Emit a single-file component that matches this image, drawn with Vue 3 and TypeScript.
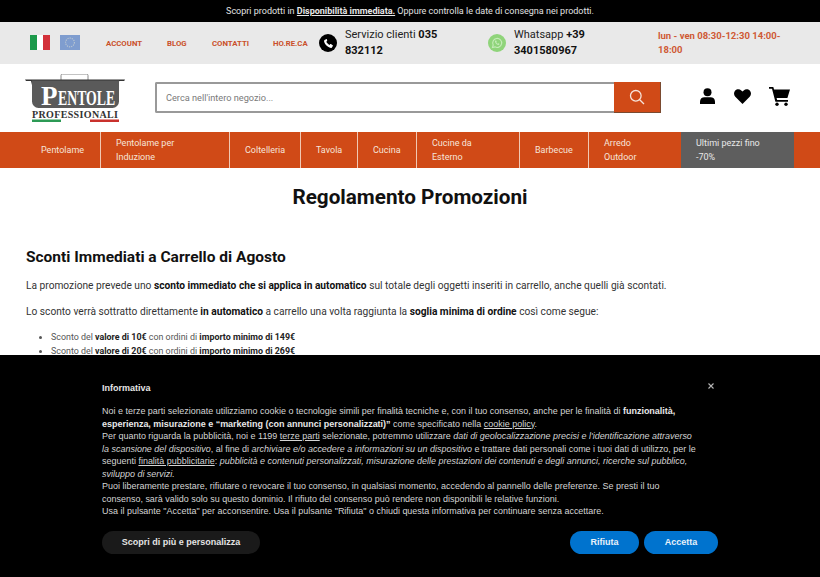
<script setup lang="ts">
const links: string[] = ['ACCOUNT', 'BLOG', 'CONTATTI', 'HO.RE.CA']
interface NavItem { lines: string[]; promo?: boolean }
const nav: NavItem[] = [
  { lines: ['Pentolame'] },
  { lines: ['Pentolame per', 'Induzione'] },
  { lines: ['Coltelleria'] },
  { lines: ['Tavola'] },
  { lines: ['Cucina'] },
  { lines: ['Cucine da', 'Esterno'] },
  { lines: ['Barbecue'] },
  { lines: ['Arredo', 'Outdoor'] },
  { lines: ['Ultimi pezzi fino', '-70%'], promo: true },
]
</script>

<template>
  <div class="page">
    <div class="notice">
      Scopri prodotti in <a class="notice-link">Disponibilità immediata.</a> Oppure controlla le date di consegna nei prodotti.
    </div>

    <div class="utility">
      <div class="flags">
        <svg width="20" height="15" viewBox="0 0 20 15"><rect width="7" height="15" fill="#1d9a4b"/><rect x="7" width="6" height="15" fill="#fff"/><rect x="13" width="7" height="15" fill="#d3313a"/></svg>
        <svg width="20" height="15" viewBox="0 0 20 15"><rect width="20" height="15" fill="#7f9dcf"/><circle cx="10" cy="7.5" r="4.4" fill="none" stroke="#b9c6d2" stroke-width="1.1" stroke-dasharray="1.2 1"/></svg>
      </div>
      <nav class="links"><a v-for="l in links" :key="l">{{ l }}</a></nav>
      <div class="contact phone">
        <span class="badge black">
          <svg width="11" height="11" viewBox="0 0 24 24"><path fill="#fff" d="M6.6 2.5 3.4 4.6C2.2 5.5 2 7 2.6 8.700c2.200 6 6.700 10.500 12.700 12.700 1.700.6 3.200.4 4.100-.8l2.100-3.200c.4-.6.2-1.300-.4-1.700l-3.900-2.500c-.5-.3-1.200-.3-1.700.2l-1.500 1.600c-2.700-1.300-5.500-4.100-6.800-6.800l1.600-1.500c.5-.5.5-1.200.2-1.700L8.300 2.900c-.4-.6-1.100-.8-1.700-.4z"/></svg>
        </span>
        <p class="contact-text">Servizio clienti <b>035 832112</b></p>
      </div>
      <div class="contact whatsapp">
        <span class="badge green">
          <svg width="12" height="12" viewBox="0 0 24 24"><path fill="none" stroke="#c6ecb9" stroke-width="2.200" d="M3 21l1.400-5A9 9 0 1 1 8 19.700z"/><path fill="#c6ecb9" d="M8.800 7.200c-.6.500-1 1.300-.8 2.300.5 2.700 3.300 5.600 6.200 6.300 1 .2 1.900-.2 2.400-.9.300-.5.300-1 0-1.200l-1.800-1c-.3-.1-.6 0-.8.200l-.6.700c-1.200-.5-2.200-1.500-2.800-2.700l.6-.6c.2-.2.300-.5.200-.8l-.8-1.900c-.3-.4-1.200-.6-1.800-.4z"/></svg>
        </span>
        <p class="contact-text">Whatsapp <b>+39 3401580967</b></p>
      </div>
      <p class="hours">lun - ven 08:30-12:30 14:00-18:00</p>
    </div>

    <header class="masthead">
      <svg class="logo" width="100" height="50" viewBox="0 0 100 50">
        <path d="M36 6V1.500A1.500 1.500 0 0 1 37.500 0h24A1.500 1.500 0 0 1 63 1.500V6" fill="none" stroke="#888" stroke-width="1"/>
        <path d="M0 5.500h100l-.8 1.500h-5l-.7 4.500h-.9V7H8v4.500h-.9L6 7H1z" fill="#333"/>
        <path d="M7 6.500h87v21a6.500 6.500 0 0 1-6.500 6.500h-74A6.500 6.500 0 0 1 7 27.500z" fill="#5a5a5a"/>
        <text x="16" y="31" class="logo-p">P</text>
        <g transform="translate(33 31) scale(.69 1)"><text class="logo-entole">ENTOLE</text></g>
        <text x="7" y="43.500" class="logo-sub" textLength="86">PROFESSIONALI</text>
        <rect x="7" y="45.500" width="29" height="2.500" fill="#2c9a55"/>
        <rect x="65" y="45.500" width="29" height="2.500" fill="#c9312d"/>
      </svg>
      <form class="search" @submit.prevent>
        <input class="search-input" type="text" placeholder="Cerca nell'intero negozio..." />
        <button class="search-btn" type="button" aria-label="Cerca">
          <svg width="16" height="16" viewBox="0 0 16 16" fill="none" stroke="#f6e3da" stroke-width="1.300"><circle cx="6.800" cy="6.800" r="5.300"/><path d="M10.700 10.700 15 15"/></svg>
        </button>
      </form>
      <div class="actions">
        <svg width="17" height="16" viewBox="0 0 17 16"><circle cx="8.500" cy="4.200" r="4" fill="#000"/><path d="M1 16v-2.600C1 10.800 3 9.200 5.500 9.200h6c2.500 0 4.500 1.600 4.500 4.200V16z" fill="#000"/></svg>
        <svg width="17" height="15" viewBox="0 0 17 15"><path d="M8.500 15 1.300 7.700C-.4 5.900-.4 3.200 1.200 1.500 2.900-.3 5.600-.3 7.300 1.400l1.200 1.200 1.200-1.200c1.700-1.700 4.400-1.700 6.100.1 1.600 1.700 1.600 4.400-.1 6.200z" fill="#000"/></svg>
        <svg width="21" height="19" viewBox="0 0 21 19"><path d="M0 0h4.300l.8 2.500H21l-2.600 8.500H7.600l.5 2H19v1.800H6.400L3 1.800H0z" fill="#000"/><circle cx="8" cy="17.200" r="1.700" fill="#000"/><circle cx="17" cy="17.200" r="1.700" fill="#000"/></svg>
      </div>
    </header>

    <nav class="menu">
      <a v-for="item in nav" :key="item.lines[0]" class="menu-item" :class="{ promo: item.promo }">
        <span v-for="line in item.lines" :key="line">{{ line }}</span>
      </a>
    </nav>

    <main class="content">
      <h1>Regolamento Promozioni</h1>
      <h2>Sconti Immediati a Carrello di Agosto</h2>
      <p>La promozione prevede uno <b>sconto immediato che si applica in automatico</b> sul totale degli oggetti inseriti in carrello, anche quelli già scontati.</p>
      <p>Lo sconto verrà sottratto direttamente <b>in automatico</b> a carrello una volta raggiunta la <b>soglia minima di ordine</b> così come segue:</p>
      <ul>
        <li>Sconto del <b>valore di 10€</b> con ordini di <b>importo minimo di 149€</b></li>
        <li>Sconto del <b>valore di 20€</b> con ordini di <b>importo minimo di 269€</b></li>
      </ul>
    </main>

    <aside class="cookie">
      <button class="close" type="button" aria-label="Chiudi">
        <svg width="6" height="6" viewBox="0 0 6 6" stroke="#b5b5b5" stroke-width="1.100"><path d="M.5.500l5 5M5.500.500l-5 5"/></svg>
      </button>
      <h3>Informativa</h3>
      <div class="cookie-text">
        <p>Noi e terze parti selezionate utilizziamo cookie o tecnologie simili per finalità tecniche e, con il tuo consenso, anche per le finalità di <b>funzionalità, esperienza, misurazione e “marketing (con annunci personalizzati)”</b> come specificato nella <u>cookie policy</u>.</p>
        <p>Per quanto riguarda la pubblicità, noi e 1199 <u>terze parti</u> selezionate, potremmo utilizzare <i>dati di geolocalizzazione precisi e l'identificazione attraverso la scansione del dispositivo</i>, al fine di <i>archiviare e/o accedere a informazioni su un dispositivo</i> e trattare dati personali come i tuoi dati di utilizzo, per le seguenti <u>finalità pubblicitarie</u>: <i>pubblicità e contenuti personalizzati, misurazione delle prestazioni dei contenuti e degli annunci, ricerche sul pubblico, sviluppo di servizi.</i></p>
        <p>Puoi liberamente prestare, rifiutare o revocare il tuo consenso, in qualsiasi momento, accedendo al pannello delle preferenze. Se presti il tuo consenso, sarà valido solo su questo dominio. Il rifiuto del consenso può rendere non disponibili le relative funzioni.</p>
        <p>Usa il pulsante "Accetta" per acconsentire. Usa il pulsante "Rifiuta" o chiudi questa informativa per continuare senza accettare.</p>
      </div>
      <div class="cookie-actions">
        <button class="btn dark" type="button">Scopri di più e personalizza</button>
        <div class="cookie-right">
          <button class="btn blue reject" type="button">Rifiuta</button>
          <button class="btn blue accept" type="button">Accetta</button>
        </div>
      </div>
    </aside>
  </div>
</template>

<style>
html, body { margin: 0; height: 100%; overflow: hidden; background: #fff; }
</style>

<style scoped>
.page { position: relative; width: 820px; height: 577px; overflow: hidden; font-family: Roboto, "Liberation Sans", sans-serif; color: #222; }
p, h1, h2, h3, ul { margin: 0; }

.notice { height: 22px; background: #000; color: #e2e2e2; font-size: 9px; line-height: 22px; text-align: center; }
.notice-link { font-weight: 700; color: #e8e8e8; text-decoration: underline; }

.utility { height: 42px; background: #e9e9e9; display: flex; align-items: center; padding-left: 30px; }
.flags { display: flex; gap: 10px; width: 76px; margin-top: -1px; }
.links { display: grid; grid-template-columns: 61px 45px 61px 46px; width: 213px; font-size: 7.800px; font-weight: 700; color: #c9502a; }
.contact { display: flex; align-items: center; gap: 8px; }
.phone { width: 169px; }
.whatsapp { width: 170px; }
.badge { width: 18px; height: 18px; border-radius: 50%; display: flex; align-items: center; justify-content: center; flex: none; }
.black { background: #000; }
.green { background: #8fd47a; }
.contact-text { width: 100px; font-size: 11px; line-height: 16px; color: #222; }
.contact-text b { font-weight: 700; color: #111; }
.hours { width: 125px; font-size: 9.500px; font-weight: 700; line-height: 14px; color: #cf5a35; }

.masthead { height: 68px; display: flex; align-items: center; padding-left: 25px; }
.logo { flex: none; margin-top: 1px; }
.logo-p { font: 700 27px "Liberation Serif", serif; fill: #fff; }
.logo-entole { font: 700 20px "Liberation Serif", serif; fill: #fff; }
.logo-sub { font: 700 10px "Liberation Serif", serif; fill: #333; }
.search { display: flex; width: 506px; height: 31px; margin-left: 30px; box-sizing: border-box; border: 2px solid #999; border-right: 0; border-radius: 2px 0 0 2px; margin-top: -2px; }
.search-input { flex: 1; min-width: 0; border: 0; outline: 0; padding: 0 9px; font: 400 9.200px Roboto, sans-serif; color: #777; background: #fff; }
.search-input::placeholder { color: #7a7a7a; opacity: 1; }
.search-btn { width: 47px; margin: -2px 0; border: 0; border-bottom: 1px solid #7a4a30; border-right: 1px solid #7a4a30; background: #d04a17; display: flex; align-items: center; justify-content: center; padding: 0; }
.actions { display: flex; align-items: center; gap: 18px; margin-left: 38px; margin-top: -4px; }

.menu { height: 36px; background: #d04a17; padding-left: 26px; display: grid; grid-template-columns: 75px 129px 71px 57px 59px 103px 69px 92px 113px; }
.menu-item { display: flex; flex-direction: column; justify-content: center; box-sizing: border-box; padding: 0 14px 0 15px; border-right: 1px solid #f0c8b4; font-size: 9px; line-height: 14px; color: #f6e4da; }
.menu-item:nth-last-child(2) { border-right: 0; }
.promo { background: #5e5e5e; border-right: 0; color: #e8e8e8; }

.content { padding: 0 26px; }
h1 { margin-top: 16px; text-align: center; font-size: 20.700px; line-height: 26px; font-weight: 700; color: #111; }
h2 { margin-top: 37px; font-size: 15.500px; line-height: 20px; font-weight: 700; color: #111; }
.content p { margin-top: 11px; font-size: 10.200px; line-height: 16px; color: #333; }
.content p + p { margin-top: 10px; }
.content p b { color: #111; }
.content ul { margin-top: 10px; padding-left: 25px; list-style: disc; font-size: 8.900px; line-height: 14px; color: #555; }
.content li b { color: #222; }

.cookie { position: absolute; left: 0; right: 0; bottom: 0; height: 222px; box-sizing: border-box; background: #000; padding: 27px 102px 0; font-family: "Liberation Sans", Arial, sans-serif; color: #d4d4d4; }
.cookie h3 { font-size: 9px; line-height: 12px; font-weight: 700; color: #e6e6e6; }
.cookie-text { margin-top: 11px; width: 597px; font-size: 8.970px; line-height: 12.500px; }
.cookie-text b { color: #e8e8e8; }
.close { position: absolute; top: 28px; right: 106px; width: 6px; height: 6px; padding: 0; border: 0; background: none; display: flex; }
.cookie-actions { display: flex; justify-content: space-between; margin-top: 13px; }
.cookie-right { display: flex; gap: 5px; }
.btn { height: 23px; border: 0; border-radius: 12px; padding: 0; font: 700 9px "Liberation Sans", Arial, sans-serif; }
.dark { width: 158px; background: #1a1a1a; color: #e4e4e4; }
.blue { background: #0073ce; color: #e8f1fa; }
.reject { width: 69px; }
.accept { width: 74px; }
</style>
